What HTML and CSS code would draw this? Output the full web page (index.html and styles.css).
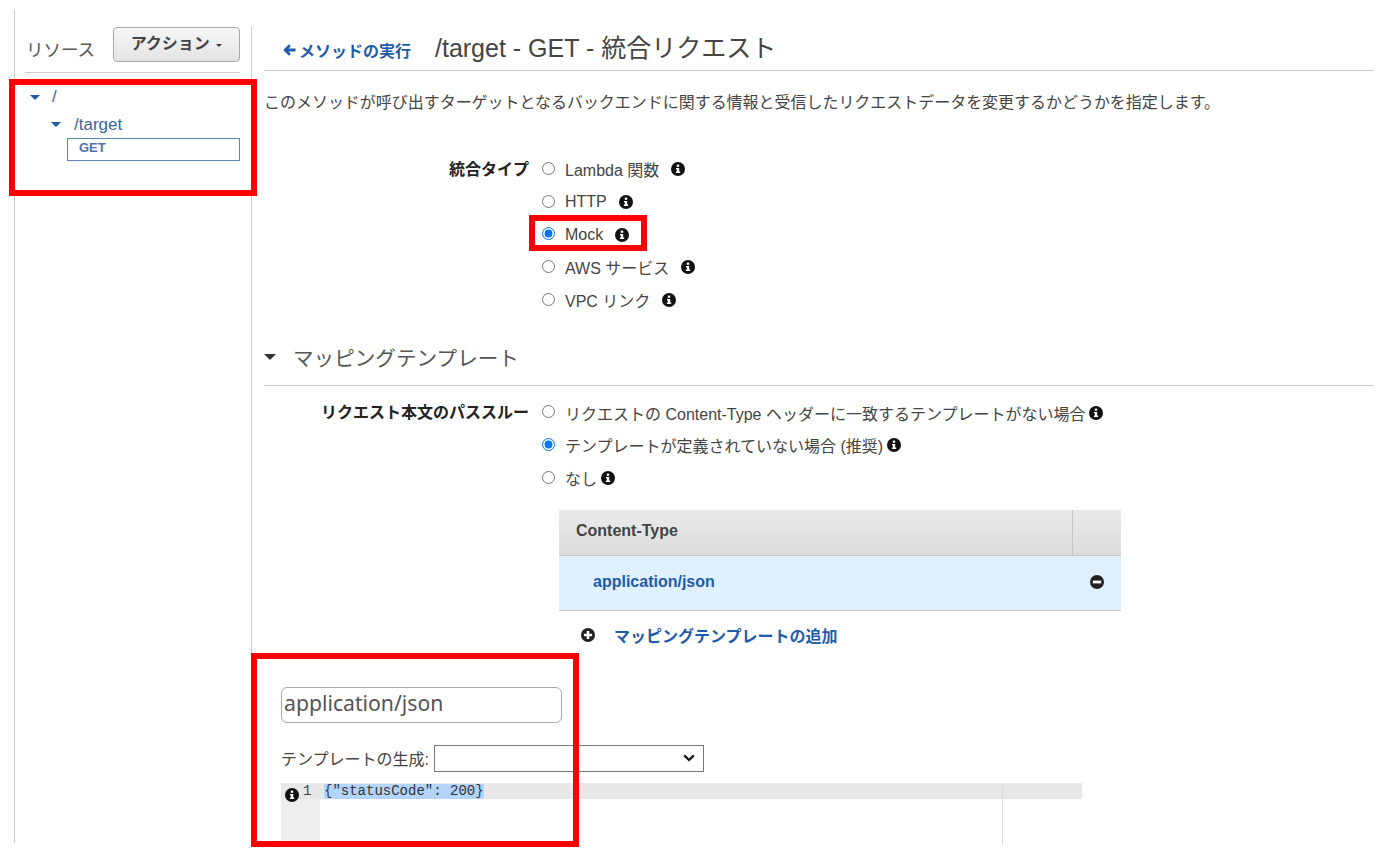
FILE: index.html
```html
<!DOCTYPE html>
<html lang="ja">
<head>
<meta charset="utf-8">
<title>統合リクエスト</title>
<link rel="stylesheet" href="styles.css">
</head>
<body>
<svg class="defs" width="0" height="0" aria-hidden="true">
  <symbol id="info" viewBox="0 0 14 14"><circle cx="7" cy="7" r="7" fill="#111"/><rect x="5.8" y="2.6" width="2.4" height="2.2" fill="#fff"/><path d="M5 6h3.2v3.6H9.2v1.5H4.9V9.6h1V7.4H5z" fill="#fff"/></symbol>
  <symbol id="minus" viewBox="0 0 14 14"><circle cx="7" cy="7" r="7" fill="#222"/><rect x="2.8" y="5.6" width="8.4" height="2.8" fill="#fff"/></symbol>
  <symbol id="plus" viewBox="0 0 14 14"><circle cx="7" cy="7" r="7" fill="#222"/><path d="M5.7 2.9h2.6v2.8h2.8v2.6H8.3v2.8H5.7V8.3H2.9V5.7h2.8z" fill="#fff"/></symbol>
</svg>
<div class="app">
  <aside class="sidebar">
    <div class="side-head">
      <span class="side-title">リソース</span>
      <button class="action-btn">アクション <i class="caret"></i></button>
    </div>
    <ul class="tree">
      <li class="tree-row tree-root"><i class="tri"></i><span class="tree-link">/</span></li>
      <li class="tree-row tree-child"><i class="tri"></i><span class="tree-link">/target</span></li>
      <li class="tree-method">GET</li>
    </ul>
  </aside>
  <main class="main">
    <header class="title-row">
      <a class="back-link"><svg class="back-arrow" viewBox="0 0 14 14"><path d="M7 1.2 1.2 7 7 12.8l1.8-1.8L6.6 8.5H13.500V5.500H6.600L8.800 3z" fill="#1f5bab"/></svg>メソッドの実行</a>
      <h1 class="page-title">/target - GET - 統合リクエスト</h1>
    </header>
    <p class="desc">このメソッドが呼び出すターゲットとなるバックエンドに関する情報と受信したリクエストデータを変更するかどうかを指定します。</p>

    <section class="form-row type-form">
      <div class="form-label">統合タイプ</div>
      <div class="radio-list">
        <label class="radio-row"><input type="radio" name="t"><span>Lambda 関数</span><svg class="ico ico-wide"><use href="#info"/></svg></label>
        <label class="radio-row"><input type="radio" name="t"><span>HTTP</span><svg class="ico ico-wide"><use href="#info"/></svg></label>
        <label class="radio-row"><input type="radio" name="t" checked><span>Mock</span><svg class="ico ico-wide"><use href="#info"/></svg></label>
        <label class="radio-row"><input type="radio" name="t"><span>AWS サービス</span><svg class="ico ico-wide"><use href="#info"/></svg></label>
        <label class="radio-row"><input type="radio" name="t"><span>VPC リンク</span><svg class="ico ico-wide"><use href="#info"/></svg></label>
      </div>
    </section>

    <h2 class="section-head"><i class="tri tri-dark"></i>マッピングテンプレート</h2>

    <section class="form-row pass-form">
      <div class="form-label">リクエスト本文のパススルー</div>
      <div class="radio-list">
        <label class="radio-row"><input type="radio" name="p"><span>リクエストの Content-Type ヘッダーに一致するテンプレートがない場合</span><svg class="ico"><use href="#info"/></svg></label>
        <label class="radio-row"><input type="radio" name="p" checked><span>テンプレートが定義されていない場合 (推奨)</span><svg class="ico"><use href="#info"/></svg></label>
        <label class="radio-row"><input type="radio" name="p"><span>なし</span><svg class="ico"><use href="#info"/></svg></label>
      </div>
    </section>

    <div class="ct-table">
      <div class="ct-head"><div class="ct-head-name">Content-Type</div><div class="ct-head-act"></div></div>
      <div class="ct-row"><a class="ct-link">application/json</a><svg class="ct-remove"><use href="#minus"/></svg></div>
    </div>
    <div class="add-row"><svg class="add-ico"><use href="#plus"/></svg><a class="add-link">マッピングテンプレートの追加</a></div>

    <div class="tpl">
      <input class="tpl-input" type="text" value="application/json">
      <div class="tpl-gen"><span class="tpl-gen-label">テンプレートの生成:</span>
        <span class="tpl-select"><svg class="chev" viewBox="0 0 12 8"><path d="M1.2 1.4 6 6l4.8-4.6" fill="none" stroke="#111" stroke-width="2.2"/></svg></span>
      </div>
      <div class="editor">
        <div class="gutter"><div class="gutter-line"><svg class="gutter-ico"><use href="#info"/></svg><span>1</span></div></div>
        <div class="code">
          <div class="code-line"><span class="code-sel">{"statusCode": 200}</span></div>
          <div class="print-margin"></div>
        </div>
      </div>
    </div>
  </main>
</div>
<div class="mark mark-tree"></div>
<div class="mark mark-mock"></div>
<div class="mark mark-tpl"></div>
</body>
</html>
```
FILE: styles.css
```css
* { box-sizing: border-box; }
html, body { margin: 0; padding: 0; }
body {
  width: 1385px; height: 856px; overflow: hidden; position: relative; background: #fff;
  font-family: "Liberation Sans", "Noto Sans CJK JP", sans-serif; font-size: 16px; color: #444;
}
.defs { position: absolute; }
.app { display: flex; margin: 9px 0 0 14px; height: 834px; border-left: 1px solid #ccc; }

.sidebar { width: 237px; flex: none; margin-top: 18px; padding: 0 11px 0 10px; border-right: 1px solid #ccc; }
.side-head { display: flex; justify-content: space-between; align-items: flex-start; height: 46px; border-bottom: 1px solid #ccc; }
.side-title { font-size: 17.5px; line-height: 24px; margin: 11px 0 0 1px; color: #555; }
.action-btn {
  width: 127px; height: 35px; padding: 0 0 5px; font: bold 16px "Liberation Sans", "Noto Sans CJK JP", sans-serif; color: #444;
  background: linear-gradient(#f6f6f6, #e4e4e4); border: 1px solid #aaa; border-radius: 4px;
}
.caret { display: inline-block; width: 0; height: 0; margin: 0 0 2px 2px; border: 3px solid transparent; border-top-color: #444; border-bottom-width: 0; }
.tree { list-style: none; margin: 0; padding: 0; }
.tree-row { display: flex; align-items: center; }
.tree-root { margin-top: 10px; height: 28px; padding-left: 5px; }
.tree-child { height: 27px; padding-left: 26px; }
.tree-root .tree-link { margin-left: 12px; }
.tree-child .tree-link { margin-left: 13px; }
.tree-link { font-size: 17px; color: #39689e; }
.tri { display: inline-block; width: 0; height: 0; flex: none; border: 5px solid transparent; border-top-color: #1f5bab; border-bottom-width: 0; border-left-width: 5.5px; border-right-width: 5.5px; }
.tree-method {
  margin: 0 0 0 42px; height: 23px; padding: 0 0 2px 11px; line-height: 18px; width: 173px;
  border: 1px solid #5a86b8; font-size: 13px; font-weight: bold; color: #4d74a8;
}

.main { width: 1110px; flex: none; margin-left: 12px; padding-top: 18px; }
.title-row { display: flex; align-items: baseline; height: 44px; padding: 6px 0 0 18px; border-bottom: 1px solid #ccc; }
.back-link { display: inline-flex; align-items: center; width: 153px; font-size: 16px; font-weight: bold; color: #1f5bab; }
.back-arrow { width: 14px; height: 14px; margin-right: 3px; }
.page-title { margin: 0; font-size: 25px; font-weight: normal; line-height: 30px; color: #444; }
.desc { margin: 22px 0 0; height: 20px; font-size: 15.97px; line-height: 20px; color: #444; white-space: nowrap; }

.form-row { display: flex; }
.type-form { margin-top: 40px; }
.pass-form { margin-top: 10px; }
.form-label { width: 265px; flex: none; text-align: right; font-weight: bold; font-size: 16px; line-height: 33px; color: #222; white-space: nowrap; }
.radio-list { margin-left: 13px; }
.radio-row { display: flex; align-items: center; height: 32.7px; font-size: 16px; color: #444; white-space: nowrap; }
.radio-row input { width: 13px; height: 13px; margin: 0 10px 2px 0; flex: none; }
.ico { width: 14px; height: 14px; margin-left: 4px; flex: none; }
.ico-wide { margin-left: 12px; }

.section-head { display: flex; align-items: center; height: 56px; margin: 14px 0 0; padding-bottom: 2px; border-bottom: 1px solid #ccc; font-size: 20.6px; font-weight: normal; color: #555; }
.tri-dark { border-top-color: #333; margin-right: 17px; border-width: 6px 6px 0; }

.ct-table { margin: 15px 0 0 295px; width: 562px; }
.ct-head { display: flex; height: 46px; background: linear-gradient(#ebebeb, #dcdcdc); border-bottom: 1px solid #c6c6c6; }
.ct-head-name { flex: 1; padding-left: 17px; line-height: 41px; font-weight: bold; font-size: 16px; color: #444; }
.ct-head-act { width: 49px; border-left: 1px solid #c6c6c6; }
.ct-row { display: flex; align-items: center; justify-content: space-between; height: 55px; padding: 0 17px 2px 34px; background: #dff0ff; border-bottom: 1px solid #ccc; }
.ct-link { font-weight: bold; font-size: 16px; color: #1f5bab; }
.ct-remove { width: 14px; height: 14px; }

.add-row { display: flex; align-items: center; height: 26px; margin: 11px 0 0 317px; }
.add-ico { width: 14px; height: 14px; margin-right: 19px; }
.add-link { font-weight: bold; font-size: 16px; color: #1f5bab; }

.tpl { margin: 39px 0 0 17px; }
.tpl-input {
  display: block; width: 281px; height: 36px; padding: 0 0 4px 2px; border: 1px solid #aaa; border-radius: 6px;
  font: 21.2px "Noto Sans", "Liberation Sans", sans-serif; color: #555; outline: none;
}
.tpl-gen { display: flex; align-items: center; margin-top: 22px; height: 27px; }
.tpl-gen-label { font-size: 16px; color: #444; width: 153px; white-space: nowrap; }
.tpl-select { display: flex; align-items: center; justify-content: flex-end; width: 270px; height: 27px; padding-right: 8px; border: 1px solid #767676; }
.chev { width: 12px; height: 8px; }
.editor { display: flex; width: 801px; height: 62px; margin-top: 11px; }
.gutter { width: 39px; flex: none; background: #eee; }
.gutter-line { display: flex; align-items: center; height: 16px; background: #e8e8e8; padding-left: 4px; font: 14px/16px "Liberation Mono", monospace; color: #444; }
.gutter-ico { width: 14px; height: 14px; margin: 8px 4px 0 0; flex: none; }
.code { flex: 1; position: relative; }
.code-line { height: 16px; padding-left: 4px; background: #e8e8e8; font: 14px/16px "Liberation Mono", monospace; color: #333; white-space: pre; }
.code-sel { display: inline-block; background: #b3d4fd; height: 15px; margin-top: 1px; line-height: 15px; vertical-align: top; }
.print-margin { position: absolute; left: 682px; top: 0; bottom: 0; width: 1px; background: #ddd; }

.mark { position: absolute; border: 6px solid #f00; pointer-events: none; }
.mark-tree { left: 9px; top: 79px; width: 248px; height: 117px; }
.mark-mock { left: 529px; top: 215px; width: 118px; height: 36px; }
.mark-tpl { left: 251px; top: 653px; width: 328px; height: 194px; }
```
